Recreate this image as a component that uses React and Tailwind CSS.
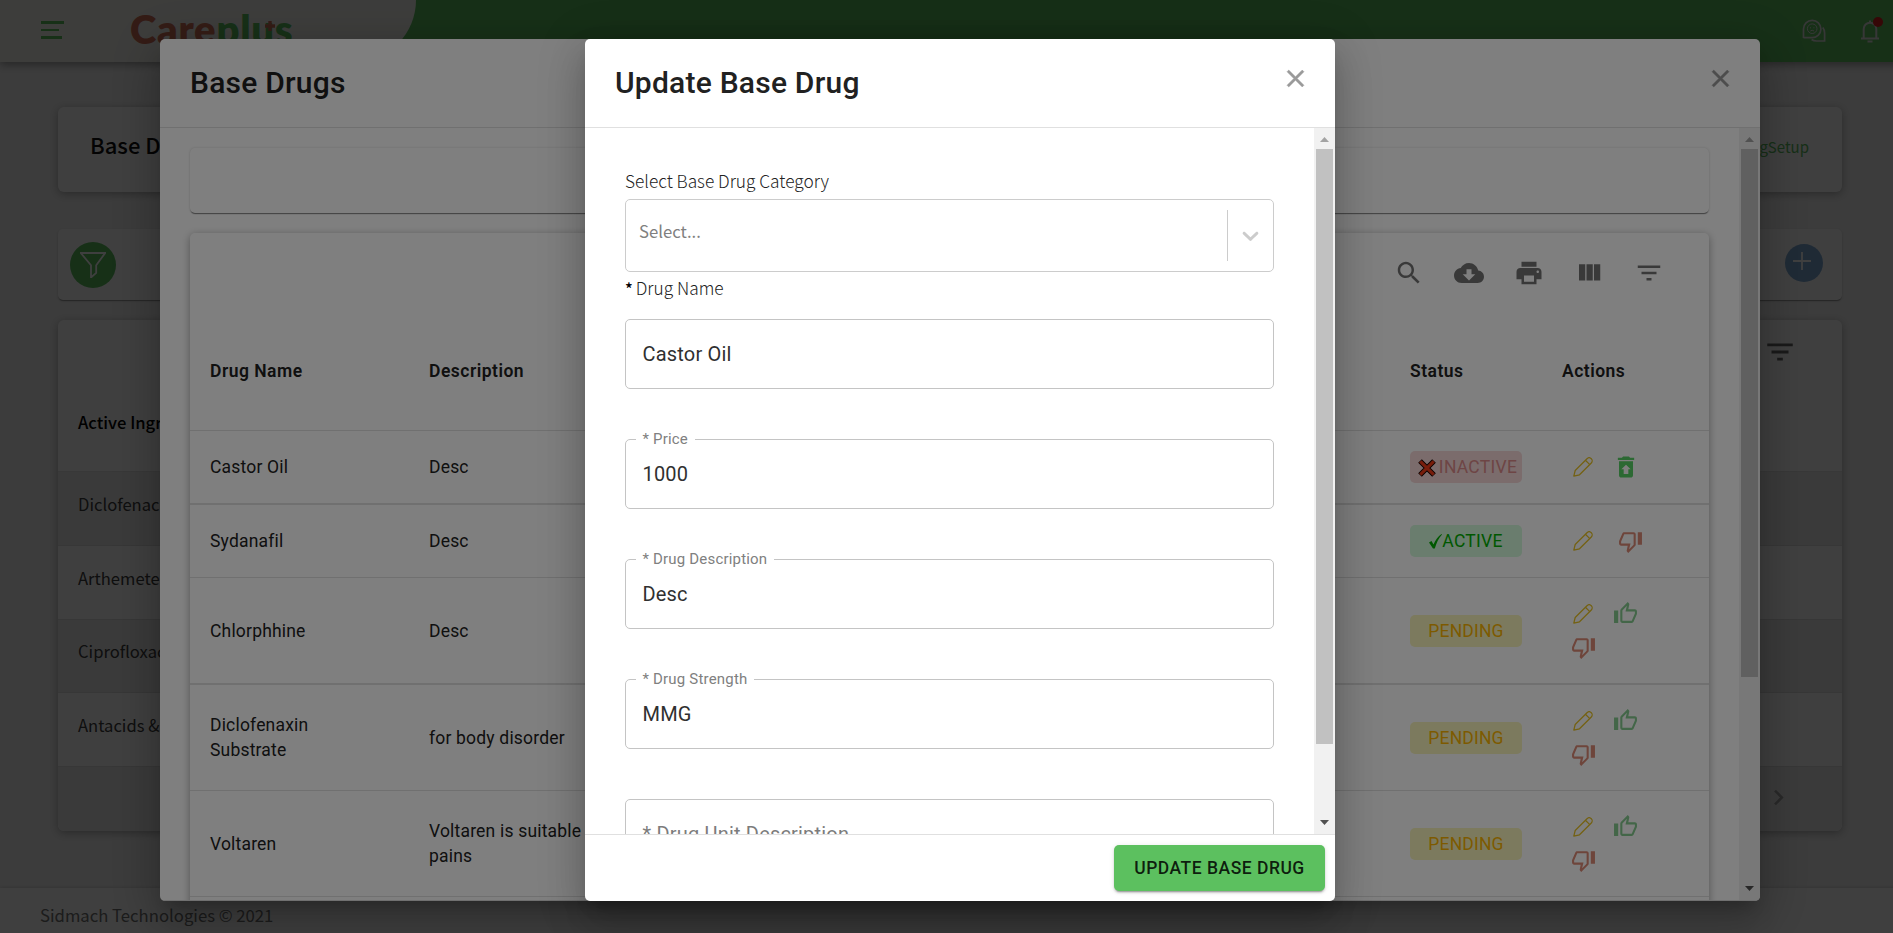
import React from "react";

const SANS = "font-['Noto_Sans_CJK_SC','Noto_Sans',sans-serif]";
const ROBOTO = "font-[Roboto,sans-serif]";
const DIALOG_SHADOW =
  "shadow-[0_11px_15px_-7px_rgba(0,0,0,0.2),0_24px_38px_3px_rgba(0,0,0,0.14),0_9px_46px_8px_rgba(0,0,0,0.12)]";

const paths = {
  search:
    "M15.5 14h-.79l-.28-.27C15.41 12.59 16 11.11 16 9.5 16 5.91 13.09 3 9.5 3S3 5.91 3 9.5 5.91 16 9.5 16c1.61 0 3.09-.59 4.23-1.57l.27.28v.79l5 4.99L20.49 19l-4.99-5zm-6 0C7.01 14 5 11.99 5 9.5S7.01 5 9.5 5 14 7.01 14 9.5 11.99 14 9.5 14z",
  cloud:
    "M19.35 10.04C18.67 6.59 15.64 4 12 4 9.11 4 6.6 5.64 5.35 8.04 2.34 8.36 0 10.91 0 14c0 3.31 2.69 6 6 6h13c2.76 0 5-2.24 5-5 0-2.64-2.05-4.78-4.65-4.96zM17 13l-5 5-5-5h3V9h4v4h3z",
  print:
    "M19 8H5c-1.66 0-3 1.34-3 3v6h4v4h12v-4h4v-6c0-1.66-1.34-3-3-3zm-3 11H8v-5h8v5zm3-7c-.55 0-1-.45-1-1s.45-1 1-1 1 .45 1 1-.45 1-1 1zm-1-9H6v4h12V3z",
  columns: "M10 18h5V5h-5v13zm-6 0h5V5H4v13zM16 5v13h5V5h-5z",
  filter: "M10 18h4v-2h-4v2zM3 6v2h18V6H3zm3 7h12v-2H6v2z",
  close:
    "M19 6.41L17.59 5 12 10.59 6.41 5 5 6.41 10.59 12 5 17.59 6.41 19 12 13.41 17.59 19 19 17.59 13.41 12z",
  next: "M10 6L8.59 7.41 13.17 12l-4.58 4.59L10 18l6-6z",
  up: "M9 21h9c.83 0 1.54-.5 1.84-1.22l3.02-7.05c.09-.23.14-.47.14-.73v-2c0-1.1-.9-2-2-2h-6.31l.95-4.57.03-.32c0-.41-.17-.79-.44-1.06L14.17 1 7.58 7.59C7.22 7.95 7 8.45 7 9v10c0 1.1.9 2 2 2zM9 9l4.34-4.34L12 10h9v2l-3 7H9V9zM1 9h4v12H1z",
  down: "M15 3H6c-.83 0-1.54.5-1.84 1.22l-3.02 7.05c-.09.23-.14.47-.14.73v2c0 1.1.9 2 2 2h6.31l-.95 4.57-.03.32c0 .41.17.79.44 1.06L9.83 23l6.59-6.59c.36-.36.58-.86.58-1.41V5c0-1.1-.9-2-2-2zm0 12l-4.34 4.34L12 14H3v-2l3-7h9v10zm4-12h4v12h-4z",
  restore:
    "M19 4h-3.5l-1-1h-5l-1 1H5v2h14V4zM6 7v12c0 1.1.9 2 2 2h8c1.1 0 2-.9 2-2V7H6zm8 7v4h-4v-4H8l4-4 4 4h-2z",
};

function Icon({ name, className }) {
  return (
    <svg viewBox="0 0 24 24" fill="currentColor" className={`shrink-0 ${className}`}>
      <path d={paths[name]} />
    </svg>
  );
}

function Pencil() {
  return (
    <svg viewBox="0 0 20 20" fill="none" stroke="currentColor" strokeWidth="1.25" strokeLinejoin="round" className="size-5 shrink-0 text-[#e8c224]">
      <path d="M.8 19.2 2.2 13.5 14 1.7a3 3 0 0 1 4.3 4.3L6.5 17.8.8 19.2Z" />
      <path d="m12.4 3.2 4.4 4.4" />
    </svg>
  );
}

function Scrollbar({ thumb }) {
  return (
    <div className="flex w-[21px] shrink-0 flex-col items-center bg-[#f1f1f1]">
      <div className="flex h-[22px] shrink-0 items-center">
        <svg viewBox="0 0 9 5" className="h-[5px] w-[9px] fill-[#a3a3a3]"><path d="M4.5 0 9 5H0z" /></svg>
      </div>
      <div className={`-mt-px w-[17px] shrink-0 bg-[#c1c1c1] ${thumb}`} />
      <div className="flex-1" />
      <div className="flex h-[23px] shrink-0 items-center">
        <svg viewBox="0 0 9 5" className="h-[5px] w-[9px] fill-[#505050]"><path d="M0 0h9L4.5 5z" /></svg>
      </div>
    </div>
  );
}

function DialogHeader({ title }) {
  return (
    <div className="flex h-[89px] shrink-0 items-center justify-between border-b border-[#e0e0e0] pl-[30px] pr-[25px]">
      <h2 className="text-[30px] font-medium leading-[48px] tracking-[0.0075em] text-[#212121]">{title}</h2>
      <Icon name="close" className="mb-[9px] size-[29px] stroke-current stroke-[0.4] text-[#9a9a9a]" />
    </div>
  );
}

function Header() {
  return (
    <header className="flex h-[62px] w-full shrink-0 items-stretch justify-between bg-[#5cc05f] shadow-[0_3px_8px_rgba(0,0,0,0.35)]">
      <div className="flex w-[416px] items-start rounded-br-[62px] bg-[#f5f5ef] pl-[41px]">
        <div className="mt-[21px] flex flex-col gap-[5px] text-[#5cc05f]">
          <div className="h-[2.5px] w-[23px] bg-current" />
          <div className="h-[2.5px] w-[18px] bg-current" />
          <div className="h-[2.5px] w-[21px] bg-current" />
        </div>
        <div className="relative ml-[66px] mt-[5px] font-[Lato,sans-serif] text-[40px] font-extrabold leading-[48px] tracking-[0.75px]">
          <span className="text-[#d07058]">Care</span>
          <span className="text-[#5cc05f]">plus</span>
          <svg viewBox="0 0 10 10" className="absolute left-[135px] top-[16px] size-[10px] stroke-[#d07058] stroke-[3.4]">
            <path d="M5 0v10M0 5h10" />
          </svg>
        </div>
      </div>
      <div className="flex items-center gap-[34px] pr-[40px] text-[#ddd]">
        <svg viewBox="0 0 24 24" fill="none" stroke="currentColor" strokeWidth="1.7" className="size-6">
          <path d="M1.5 19V10a8.7 8.7 0 1 1 8.7 8.7H1.5Z" />
          <circle cx="10.2" cy="9.7" r="4.8" strokeWidth="1" />
          <path d="M8.5 8.3v1M11.9 8.3v1M8.3 12q1.9-1.5 3.8 0" strokeWidth="1" />
          <path d="M20.8 8.5q1.800 2.300 1.800 5.500v8h-8q-3 0-5-1.500" />
        </svg>
        <div className="relative flex">
          <svg viewBox="0 0 20 24" fill="none" stroke="currentColor" strokeWidth="2" className="h-6 w-5">
            <path d="M1 19.5h18M3.7 19V10a6.3 6.3 0 0 1 12.6 0v9M10 4V1.5M7.5 22.5h5" />
          </svg>
          <div className="absolute -top-[2px] left-[13px] size-[10px] rounded-full bg-[#d91c1c]" />
        </div>
      </div>
    </header>
  );
}

const ingredients = ["Diclofenac", "Arthemeter", "Ciprofloxacin", "Antacids & "];

function Page() {
  return (
    <div className={`flex h-[940px] w-[1920px] flex-col bg-[#f1f1f1] ${SANS}`}>
      <Header />
      <main className="flex flex-1 flex-col pl-[58px] pr-[78px] pt-[45px]">
        <section className="flex h-[85px] items-start justify-between rounded-md bg-white pl-[32px] pr-[33px] pt-[24px] shadow-[0_2px_8px_rgba(0,0,0,0.3)]">
          <h1 className="text-[22px] font-medium leading-[27px] text-[#111]">Base Drugs</h1>
          <span className="text-[15px] leading-[31px] text-[#5cc05f]">DrugSetup</span>
        </section>
        <section className="mt-[37px] flex h-[71px] items-center justify-between rounded-[5px] bg-white pl-[12px] pr-[19px] shadow-[0_2px_1px_-1px_rgba(0,0,0,0.2),0_1px_1px_rgba(0,0,0,0.14),0_1px_3px_rgba(0,0,0,0.12)]">
          <div className="flex size-[46px] items-center justify-center rounded-full bg-[#5cc05f]">
            <svg viewBox="0 0 26 26" fill="none" stroke="#fff" strokeWidth="1.8" className="size-[26px]">
              <path d="M.8 1h24.4l-9 12.3v7.5L11 25.500V13.300L.8 1Z" />
            </svg>
          </div>
          <div className="mb-[3px] flex size-[38px] items-center justify-center rounded-full bg-[#7fabd6]">
            <svg viewBox="0 0 20 20" stroke="#fff" strokeWidth="1.8" className="mb-[5px] mr-[5px] size-[20px]">
              <path d="M10 1v18M1 10h18" />
            </svg>
          </div>
        </section>
        <section className="mt-[20px] flex h-[511px] flex-col overflow-hidden rounded-md bg-white text-[16.6px] text-[#3c3c3c] shadow-[0_2px_8px_rgba(0,0,0,0.3)]">
          <div className="flex h-[152px] justify-between border-b border-[#e0e0e0] pl-[20px] pr-[45px]">
            <span className="mt-[88px] font-medium leading-[28px] text-black">Active Ingredient</span>
            <Icon name="filter" className="mt-[15px] size-[34px] text-black/60" />
          </div>
          {ingredients.map((name, i) => (
            <div key={name} className={`flex h-[73.75px] items-center border-b border-[#dcdcdc] pb-[9px] pl-[20px] leading-[28px] ${i % 2 === 0 ? "bg-[#ebebeb]" : "bg-white"}`}>
              {name}
            </div>
          ))}
          <div className="flex flex-1 items-center justify-end bg-[#ebebeb] pr-[48px]">
            <Icon name="next" className="mb-[3px] size-[31px] text-black/30" />
          </div>
        </section>
      </main>
      <footer className="flex h-[52px] shrink-0 items-start bg-[#fdfdfd] pl-[40px] pt-[13px] text-[16.7px] leading-[28px] text-[#707070] shadow-[0_-1px_3px_rgba(0,0,0,0.12)]">
        Sidmach Technologies © 2021
      </footer>
    </div>
  );
}

const rows = [
  { name: ["Castor Oil"], desc: ["Desc"], status: "INACTIVE", height: "h-[74px] border-b-2" },
  { name: ["Sydanafil"], desc: ["Desc"], status: "ACTIVE", height: "h-[73px] border-b" },
  { name: ["Chlorphhine"], desc: ["Desc"], status: "PENDING", height: "h-[107px] border-b-2" },
  { name: ["Diclofenaxin", "Substrate"], desc: ["for body disorder"], status: "PENDING", height: "h-[106px] border-b" },
  { name: ["Voltaren"], desc: ["Voltaren is suitable", "pains"], status: "PENDING", height: "h-[106px] border-b" },
];

function Status({ value }) {
  const base = "flex h-8 w-[112px] items-center justify-center rounded-[5px] pt-[1px]";
  if (value === "INACTIVE") {
    return (
      <div className={`${base} bg-[#f6d9d9] pl-[2px] text-[#dc8a8a]`}>
        <svg viewBox="0 0 20 20" className="mr-[2px] size-[20px] shrink-0">
          <path d="M3 3l14 14M17 3 3 17" stroke="#140400" strokeWidth="5.2" />
          <path d="M3.3 3.3l13.4 13.4M16.7 3.3 3.3 16.7" stroke="#f03a17" strokeWidth="3.2" />
        </svg>
        <span className="tracking-[0.015em]">INACTIVE</span>
      </div>
    );
  }
  if (value === "ACTIVE") {
    return (
      <div className={`${base} bg-[#d4fadc] pt-0 text-[#00b000]`}>
        <svg viewBox="0 0 13 15" className="h-[15px] w-[13px] shrink-0 fill-current">
          <path d="M0 8.5 2.5 7l2 3.5C6.5 6 9 2.500 12.500 0L13 .6C9.500 4.500 7.500 9 5.800 14.500H4Z" />
        </svg>
        <span className="tracking-[0.015em]">ACTIVE</span>
      </div>
    );
  }
  return <div className={`${base} bg-[#f9f4bc] text-[#fbb400]`}>PENDING</div>;
}

function Actions({ status }) {
  if (status === "INACTIVE") {
    return (
      <div className="flex items-center">
        <Pencil />
        <Icon name="restore" className="ml-[19px] size-[28px] text-[#58d266]" />
      </div>
    );
  }
  if (status === "ACTIVE") {
    return (
      <div className="flex items-center">
        <Pencil />
        <Icon name="down" className="ml-[25px] size-[25px] text-[#dc8a76]" />
      </div>
    );
  }
  return (
    <div className="flex flex-col gap-[9px]">
      <div className="flex items-center">
        <Pencil />
        <Icon name="up" className="ml-[20px] size-[25px] text-[#86cc90]" />
      </div>
      <Icon name="down" className="-ml-[2px] size-[25px] text-[#dc8a76]" />
    </div>
  );
}

const GRID = "grid grid-cols-[219px_981px_152px_1fr] items-center pl-[20px]";

function BaseDrugsDialog() {
  return (
    <div className={`flex h-[862px] w-[1600px] flex-col overflow-hidden rounded-[5px] bg-white ${ROBOTO}`}>
      <DialogHeader title="Base Drugs" />
      <div className="flex min-h-0 flex-1 border-b border-[#e0e0e0]">
        <div className="flex min-w-0 flex-1 flex-col overflow-hidden px-[30px] pt-[20px]">
          <div className="h-[65px] shrink-0 rounded-[5px] bg-white shadow-[0_2px_1px_-1px_rgba(0,0,0,0.35),0_1px_1px_rgba(0,0,0,0.16),0_0_3px_rgba(0,0,0,0.15)]" />
          <div className="mt-[20px] shrink-0 rounded-[5px] bg-white pb-10 text-[17.5px] leading-[25px] text-[#212121] shadow-[0_2px_8px_rgba(0,0,0,0.35)]">
            <div className="flex h-[80px] items-center justify-end gap-[30px] pr-[45px] text-black/55">
              <Icon name="search" className="size-[30px]" />
              <Icon name="cloud" className="size-[30px]" />
              <Icon name="print" className="size-[30px]" />
              <Icon name="columns" className="size-[30px]" />
              <Icon name="filter" className="size-[30px]" />
            </div>
            <div className={`${GRID} h-[118px] border-b border-[#e0e0e0] font-semibold tracking-[0.028em]`}>
              <span>Drug Name</span>
              <span>Description</span>
              <span>Status</span>
              <span>Actions</span>
            </div>
            {rows.map((row) => (
              <div key={row.name[0]} className={`${GRID} tracking-[0.01071em] border-[#e0e0e0] ${row.height}`}>
                <div className="pt-[1px]">{row.name.map((line) => <div key={line}>{line}</div>)}</div>
                <div className="pt-[1px]">{row.desc.map((line) => <div key={line}>{line}</div>)}</div>
                <Status value={row.status} />
                <div className="pl-[11px]"><Actions status={row.status} /></div>
              </div>
            ))}
          </div>
        </div>
        <Scrollbar thumb="h-[528px]" />
      </div>
    </div>
  );
}

function OutlinedField({ label, value }) {
  return (
    <div className="relative flex h-[70px] shrink-0 items-center rounded-[5px] border border-[#c4c4c4] px-[16.5px] text-[20px] leading-[24px] tracking-[0.00938em] text-[#303030]">
      {label && (
        <span className="absolute -top-[11px] left-[10px] bg-white px-[6.5px] text-[15px] leading-[20px] text-[#808080]">{label}</span>
      )}
      {value}
    </div>
  );
}

function UpdateDrugDialog() {
  return (
    <div className={`flex h-[862px] w-[750px] flex-col overflow-hidden rounded-[5px] bg-white ${ROBOTO}`}>
      <DialogHeader title="Update Base Drug" />
      <div className="flex min-h-0 flex-1">
        <div className="flex min-w-0 flex-1 flex-col overflow-hidden pl-[40px] pr-[40px] pt-[39px]">
          <label className={`h-[32px] shrink-0 text-[17.3px] font-light leading-[28px] text-[#222] ${SANS}`}>Select Base Drug Category</label>
          <div className={`flex h-[73px] shrink-0 rounded-[5px] border border-[#ccc] ${SANS}`}>
            <span className="mt-[17px] flex-1 pl-[13px] text-[16.7px] leading-[28px] text-[#808080]">Select...</span>
            <div className="my-[10px] w-px bg-[#ccc]" />
            <div className="flex w-[45px] items-center justify-center">
              <svg viewBox="0 0 20 20" className="size-[27px] fill-[#ccc]">
                <path d="M4.516 7.548c0.436-0.446 1.043-0.481 1.576 0l3.908 3.747 3.908-3.747c0.533-0.481 1.141-0.446 1.574 0 0.436 0.445 0.408 1.197 0 1.615-0.406 0.418-4.695 4.502-4.695 4.502-0.217 0.223-0.502 0.335-0.787 0.335s-0.570-0.112-0.789-0.335c0 0-4.287-4.084-4.695-4.502s-0.436-1.170 0-1.615z" />
              </svg>
            </div>
          </div>
          <label className={`h-[47px] shrink-0 pt-[2px] text-[17.3px] font-light leading-[28px] text-[#222] ${SANS}`}>
            <span className="mr-[3px] text-[16px] font-medium text-black">*</span>Drug Name
          </label>
          <div className="flex flex-col gap-[50px]">
            <OutlinedField value="Castor Oil" />
            <OutlinedField label="* Price" value="1000" />
            <OutlinedField label="* Drug Description" value="Desc" />
            <OutlinedField label="* Drug Strength" value="MMG" />
            <OutlinedField value={<span className="text-[#7c7c7c]">* Drug Unit Description</span>} />
          </div>
        </div>
        <Scrollbar thumb="h-[595px]" />
      </div>
      <div className="flex h-[67px] shrink-0 items-center justify-end border-t border-[#e0e0e0] pr-[10px]">
        <button className="h-[46px] w-[211px] rounded-[5px] bg-[#5cc05f] text-[17.5px] font-medium leading-[30px] tracking-[0.02857em] text-black/85 shadow-[0_3px_1px_-2px_rgba(0,0,0,0.2),0_2px_2px_rgba(0,0,0,0.14),0_1px_5px_rgba(0,0,0,0.12)]">
          UPDATE BASE DRUG
        </button>
      </div>
    </div>
  );
}

export default function App() {
  return (
    <div className="relative h-[933px] w-[1893px] overflow-hidden">
      <Page />
      <div className="absolute left-0 top-0 flex h-[940px] w-[1920px] items-center justify-center bg-black/50">
        <div className={`rounded-[5px] ${DIALOG_SHADOW}`}><BaseDrugsDialog /></div>
      </div>
      <div className="absolute left-0 top-0 flex h-[940px] w-[1920px] items-center justify-center bg-black/50">
        <div className={`rounded-[5px] ${DIALOG_SHADOW}`}><UpdateDrugDialog /></div>
      </div>
    </div>
  );
}
